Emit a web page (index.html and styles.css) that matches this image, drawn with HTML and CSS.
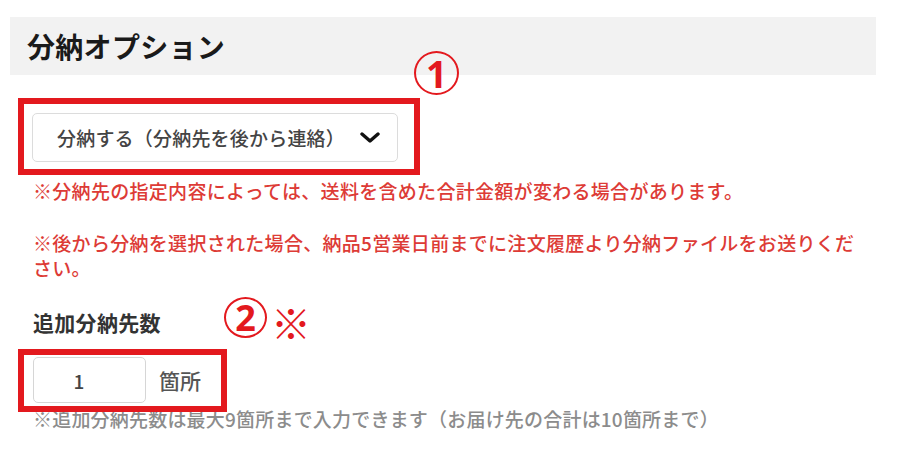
FILE: index.html
```html
<!DOCTYPE html>
<html lang="ja">
<head>
<meta charset="utf-8">
<title>分納オプション</title>
<link rel="stylesheet" href="styles.css">
</head>
<body>
<div class="page">
  <div class="section-head">
    <h2 class="section-title">分納オプション</h2>
  </div>
  <div class="content">
    <div class="mark-box mark-select">
      <div class="select">
        <span class="select-text">分納する（分納先を後から連絡）</span>
        <svg class="chevron" width="20" height="11" viewBox="0 0 20 11"><polyline points="2,2 10,9 18,2" fill="none" stroke="#111" stroke-width="3.4" stroke-linecap="round" stroke-linejoin="round"/></svg>
      </div>
      <span class="num-badge badge-1">1</span>
    </div>
    <p class="note-red n1">※分納先の指定内容によっては、送料を含めた合計金額が変わる場合があります。</p>
    <p class="note-red n2">※後から分納を選択された場合、納品5営業日前までに注文履歴より分納ファイルをお送りください。</p>
    <div class="label-row">
      <h3 class="field-label">追加分納先数</h3>
      <div class="annot-2">
        <span class="num-badge">2</span>
        <span class="kome">※</span>
      </div>
    </div>
    <div class="mark-box mark-input">
      <div class="num-input">1</div>
      <span class="unit">箇所</span>
    </div>
    <p class="note-gray">※追加分納先数は最大9箇所まで入力できます（お届け先の合計は10箇所まで）</p>
  </div>
</div>
</body>
</html>
```

FILE: styles.css
```css
* { box-sizing: border-box; }
html, body { margin: 0; padding: 0; background: #fff; }
body {
  font-family: "Noto Sans CJK JP", "Noto Sans", sans-serif;
  color: #333;
  width: 900px;
  height: 458px;
  overflow: hidden;
}
.page { padding: 17px 24px 0 10px; }
.section-head {
  background: #f2f2f2;
  height: 58px;
  width: 866px;
  display: flex;
  align-items: center;
  padding-left: 17px;
}
.section-title {
  margin: 0;
  font-size: 28px;
  line-height: 1;
  font-weight: 700;
  color: #1a1a1a;
  letter-spacing: 0.3px;
}
.content { padding-left: 23px; }

.mark-box {
  position: relative;
  z-index: 1;
  display: flex;
  align-items: center;
  width: fit-content;
  border: 6px solid #e3191e;
  margin-left: -15px;
}
.mark-select {
  margin-top: 23px;
  padding: 9px 16px 7px 8px;
}
.select {
  width: 366px;
  height: 49px;
  border: 1.5px solid #dcdcdc;
  border-radius: 5px;
  background: #fff;
  display: flex;
  align-items: center;
  justify-content: space-between;
  padding: 0 17px 0 24px;
}
.select-text {
  font-size: 19px;
  font-weight: 500;
  color: #444;
  line-height: 1;
  letter-spacing: 0.2px;
}
.chevron { display: block; }

.num-badge {
  width: 45px;
  height: 44px;
  border: 2px solid #e3191e;
  border-radius: 50%;
  color: #e3191e;
  font-family: "Noto Sans", Roboto, sans-serif;
  font-weight: 700;
  font-size: 37px;
  line-height: 1;
  display: flex;
  align-items: center;
  justify-content: center;
  background: transparent;
}
.badge-1 {
  position: absolute;
  left: 390px;
  top: -53px;
}

.note-red {
  margin: 0;
  color: #dd3b36;
  font-size: 19px;
  font-weight: 500;
  line-height: 25px;
  letter-spacing: 0.3px;
  max-width: 822px;
}
.n1 { margin-top: 3px; }
.n2 { margin-top: 27px; }

.label-row {
  position: relative;
  margin-top: 27px;
}
.field-label {
  margin: 0;
  font-size: 21px;
  line-height: 30px;
  font-weight: 700;
  color: #333;
  letter-spacing: 0.3px;
}
.annot-2 {
  position: absolute;
  left: 191px;
  top: -10px;
  display: flex;
  align-items: flex-start;
  gap: 4px;
}
.annot-2 .num-badge {
  width: 43px;
  height: 41px;
  font-size: 36px;
}
.kome {
  color: #e3191e;
  font-size: 40px;
  line-height: 40px;
  margin-top: 5px;
  font-weight: 300;
}

.mark-input {
  margin-top: 12px;
  padding: 2px 20px 3px 9px;
}
.num-input {
  width: 113px;
  height: 46px;
  border: 1.5px solid #d6d6d6;
  border-radius: 5px;
  background: #fff;
  display: flex;
  align-items: center;
  justify-content: center;
  padding-right: 21px;
  font-size: 19px;
  font-weight: 500;
  color: #444;
}
.unit {
  margin-left: 13px;
  font-size: 21px;
  font-weight: 500;
  color: #555;
  line-height: 1;
}
.note-gray {
  margin: -6px 0 0;
  font-size: 19px;
  font-weight: 500;
  line-height: 25px;
  letter-spacing: 0.2px;
  color: #8c8c8c;
}
```
